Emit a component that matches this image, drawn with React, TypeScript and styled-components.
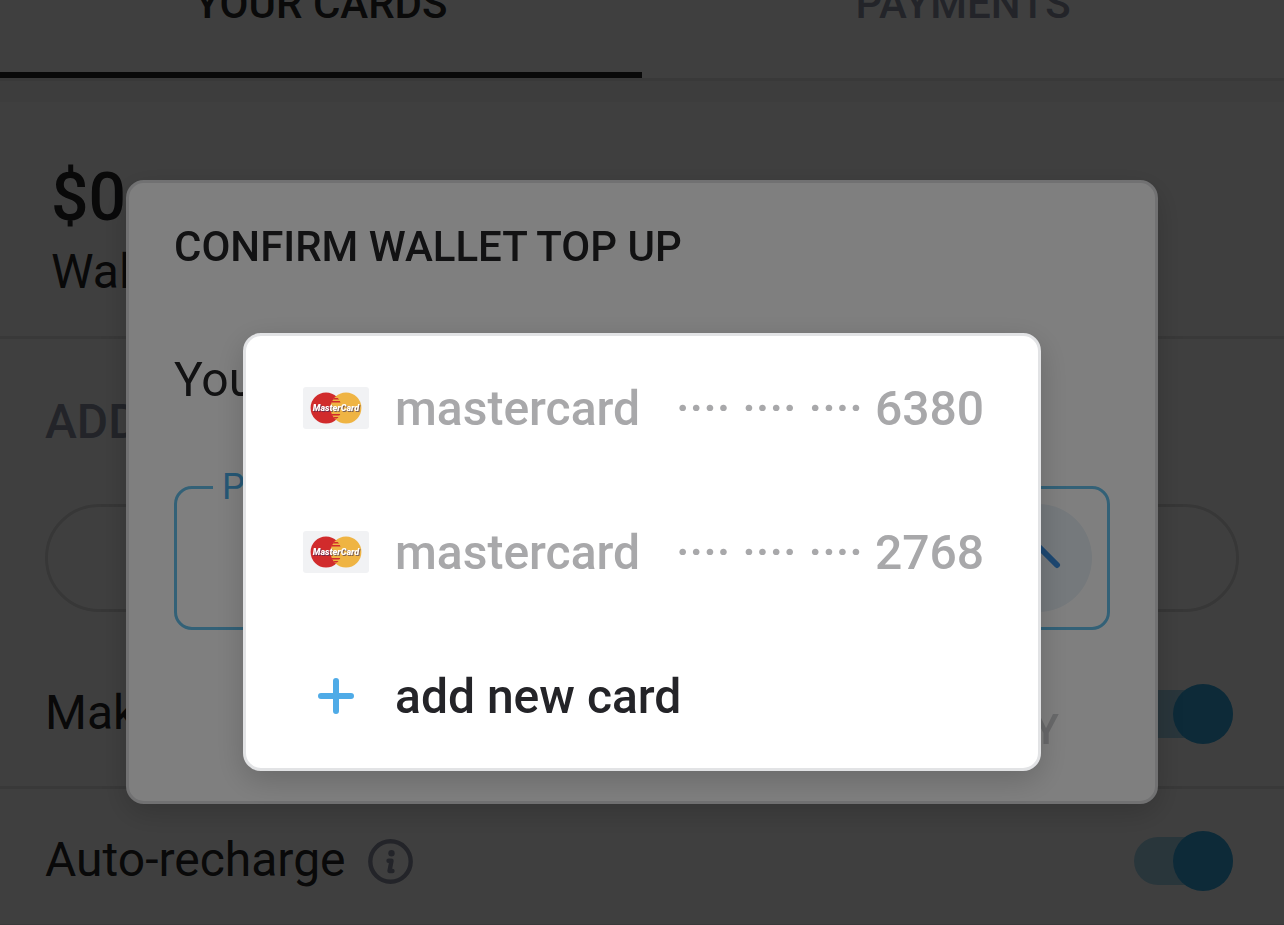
import React from "react";
import styled, { createGlobalStyle } from "styled-components";

const GlobalStyle = createGlobalStyle`
  *, *::before, *::after { box-sizing: border-box; }
  html, body { margin: 0; overflow: hidden; }
  body {
    background: #ffffff;
    color: #242426;
    font-family: Roboto, "Open Sans", sans-serif;
    font-size: 48px;
    line-height: 60px;
  }
  button, input { font: inherit; color: inherit; margin: 0; }
  h2, p { margin: 0; }
`;

const Page = styled.main`
  display: flex;
  flex-direction: column;
  margin-top: -44px;
`;

const Tabs = styled.nav`
  display: flex;
  border-bottom: 3px solid #e4e4e4;
`;

const Tab = styled.button<{ $active?: boolean }>`
  flex: 1;
  padding: 24px 0 44px;
  border: 0;
  border-bottom: 6px solid ${(p) => (p.$active ? "#242424" : "transparent")};
  background: #ffffff;
  color: ${(p) => (p.$active ? "#282828" : "#8c92a4")};
  font-size: 42px;
  font-weight: 500;
  line-height: 48px;
`;

const Wallet = styled.section`
  padding: 57px 51px 34px;
  border-top: 21px solid #f5f5f5;
  border-bottom: 3px solid #e4e4e4;
`;

const Balance = styled.div`
  font-size: 66px;
  font-weight: 500;
  line-height: 78px;
`;

const Caption = styled.div`
  padding-top: 5px;
`;

const Funds = styled.section`
  padding: 53px 45px 42px;
  border-bottom: 3px solid #e4e4e4;
`;

const SectionTitle = styled.h2`
  color: #8c92a4;
  font-size: 48px;
  font-weight: 500;
  line-height: 60px;
`;

const Pill = styled.button`
  display: block;
  width: 100%;
  height: 108px;
  margin: 52px 0 72px;
  border: 3px solid #dcdcdc;
  border-radius: 54px;
  background: none;
`;

const SettingRow = styled.div`
  display: flex;
  align-items: center;
  justify-content: space-between;
  height: 60px;
  padding-right: 6px;
`;

const SettingLabel = styled.label`
  display: flex;
  align-items: center;
  gap: 22px;
`;

const SettingName = styled.span`
  padding-bottom: 2px;
`;

const SwitchTrack = styled.span`
  display: flex;
  align-items: center;
  width: 99px;
  height: 48px;
  border-radius: 24px;
  background: #a6d8ee;
`;

const Switch = styled.input`
  appearance: none;
  display: flex;
  justify-content: flex-end;
  width: 99px;
  height: 60px;

  &::before {
    content: "";
    width: 60px;
    height: 60px;
    border-radius: 50%;
    background: #34a8e0;
  }
`;

const Recharge = styled.section`
  padding: 42px 45px 33px;
  border-bottom: 3px solid #e4e4e4;
`;

const Backdrop = styled.div<{ $top: number; $side: number }>`
  position: fixed;
  inset: 0;
  padding: ${(p) => p.$top}px ${(p) => p.$side}px 0;
  background: rgba(0, 0, 0, 0.5);
`;

const Surface = styled.div`
  border: 3px solid #e2e3e5;
  border-radius: 18px;
  background: #ffffff;
  box-shadow: 0 9px 30px rgba(0, 0, 0, 0.18);
`;

const Dialog = styled(Surface)`
  padding: 37px 45px 35px;
`;

const DialogTitle = styled.h2`
  font-size: 42px;
  font-weight: 500;
  line-height: 54px;
`;

const Message = styled.p`
  padding: 76px 0;
`;

const Field = styled.div`
  position: relative;
  display: flex;
  justify-content: flex-end;
  padding: 15px;
  border: 3px solid #66c2ee;
  border-radius: 18px;
`;

const FieldLabel = styled.label`
  position: absolute;
  top: -23px;
  left: 36px;
  padding: 0 9px;
  background: #ffffff;
  color: #4cb0ec;
  font-size: 36px;
  line-height: 42px;
`;

const Expand = styled.button`
  display: grid;
  place-items: center;
  width: 108px;
  height: 108px;
  padding: 0;
  border: 0;
  border-radius: 50%;
  background: #eaf2f8;
`;

const Actions = styled.div`
  display: flex;
  justify-content: flex-end;
  padding: 64px 6px 0;
`;

const Action = styled.button`
  padding: 9px 45px;
  border: 0;
  background: none;
  color: #d2d3d6;
  font-size: 42px;
  font-weight: 500;
  line-height: 54px;
`;

const Menu = styled(Surface)`
  display: flex;
  flex-direction: column;
`;

const MenuItem = styled.button<{ $muted?: boolean }>`
  display: flex;
  align-items: center;
  height: 144px;
  padding: 0 54px 0 57px;
  border: 0;
  background: none;
  color: ${(p) => (p.$muted ? "#a8a8aa" : "#242428")};
  font-weight: 500;
  text-align: left;
  white-space: nowrap;
`;

const ItemIcon = styled.span`
  display: flex;
  justify-content: center;
  width: 66px;
  margin-right: 26px;
`;

const ItemText = styled.span`
  flex: 1;
  display: flex;
  justify-content: space-between;
  padding-top: 2px;
`;

const LogoText = styled.text`
  fill: #ffffff;
  font-family: Roboto, sans-serif;
  font-size: 9px;
  font-style: italic;
  font-weight: 900;
  text-anchor: middle;
  filter: drop-shadow(1px 1px 0 rgba(50, 40, 90, 0.6));
`;

function MasterCardLogo() {
  const stripes = [8, 11, 14, 27, 30, 33];
  return (
    <svg width="66" height="42" viewBox="0 0 66 42" aria-hidden="true">
      <defs>
        <clipPath id="overlap">
          <path d="M33 9.2a15.4 15.4 0 0 1 0 23.6a15.4 15.4 0 0 1 0-23.6z" />
        </clipPath>
      </defs>
      <rect width="66" height="42" rx="3" fill="#f1f2f4" />
      <circle cx="23" cy="21" r="15.4" fill="#d12b2c" />
      <circle cx="43" cy="21" r="15.4" fill="#efb443" />
      <g clipPath="url(#overlap)" fill="#d12b2c">
        {stripes.map((y) => (
          <rect key={y} x="27" y={y} width="12" height="1.5" />
        ))}
      </g>
      <LogoText x="33" y="24">
        MasterCard
      </LogoText>
    </svg>
  );
}

function PlusIcon() {
  return (
    <svg width="36" height="36" viewBox="0 0 36 36" aria-hidden="true">
      <path d="M18 3v30M3 18h30" stroke="#4fabe7" strokeWidth="6" strokeLinecap="round" />
    </svg>
  );
}

function InfoIcon() {
  return (
    <svg width="45" height="45" viewBox="0 0 45 45" fill="none" stroke="#8c92a4" aria-hidden="true">
      <circle cx="22.5" cy="22.5" r="20.2" strokeWidth="4.4" />
      <circle cx="23.5" cy="14.3" r="3.2" fill="#8c92a4" stroke="none" />
      <path d="M20.5 21.8h3l-2 10.2h3" strokeWidth="4.4" strokeLinecap="round" strokeLinejoin="round" />
    </svg>
  );
}

function ChevronUp() {
  return (
    <svg width="48" height="48" viewBox="0 0 48 48" fill="none" aria-hidden="true">
      <path
        d="M5 31L24 12l19 19"
        stroke="#3a90e4"
        strokeWidth="6"
        strokeLinecap="round"
        strokeLinejoin="round"
      />
    </svg>
  );
}

function Setting({ id, label, info }: { id: string; label: string; info?: boolean }) {
  return (
    <SettingRow>
      <SettingLabel htmlFor={id}>
        <SettingName>{label}</SettingName>
        {info && <InfoIcon />}
      </SettingLabel>
      <SwitchTrack>
        <Switch id={id} type="checkbox" role="switch" defaultChecked />
      </SwitchTrack>
    </SettingRow>
  );
}

const cards = ["6380", "2768"];

export default function App() {
  return (
    <>
      <GlobalStyle />
      <Page>
        <Tabs>
          <Tab $active>YOUR CARDS</Tab>
          <Tab>PAYMENTS</Tab>
        </Tabs>
        <Wallet>
          <Balance>$0</Balance>
          <Caption>Wallet</Caption>
        </Wallet>
        <Funds>
          <SectionTitle>ADD</SectionTitle>
          <Pill type="button" aria-label="Amount" />
          <Setting id="make-default" label="Make" />
        </Funds>
        <Recharge>
          <Setting id="auto-recharge" label="Auto-recharge" info />
        </Recharge>
      </Page>

      <Backdrop $top={180} $side={126}>
        <Dialog role="dialog" aria-labelledby="dialog-title">
          <DialogTitle id="dialog-title">CONFIRM WALLET TOP UP</DialogTitle>
          <Message>You</Message>
          <Field>
            <FieldLabel htmlFor="payment-card">Payment</FieldLabel>
            <Expand id="payment-card" type="button">
              <ChevronUp />
            </Expand>
          </Field>
          <Actions>
            <Action type="button">PAY</Action>
          </Actions>
        </Dialog>
      </Backdrop>

      <Backdrop $top={333} $side={243}>
        <Menu>
          {cards.map((number) => (
            <MenuItem key={number} type="button" $muted>
              <ItemIcon>
                <MasterCardLogo />
              </ItemIcon>
              <ItemText>
                <span>mastercard</span>
                <span>···· ···· ···· {number}</span>
              </ItemText>
            </MenuItem>
          ))}
          <MenuItem type="button">
            <ItemIcon>
              <PlusIcon />
            </ItemIcon>
            <ItemText>add new card</ItemText>
          </MenuItem>
        </Menu>
      </Backdrop>
    </>
  );
}
